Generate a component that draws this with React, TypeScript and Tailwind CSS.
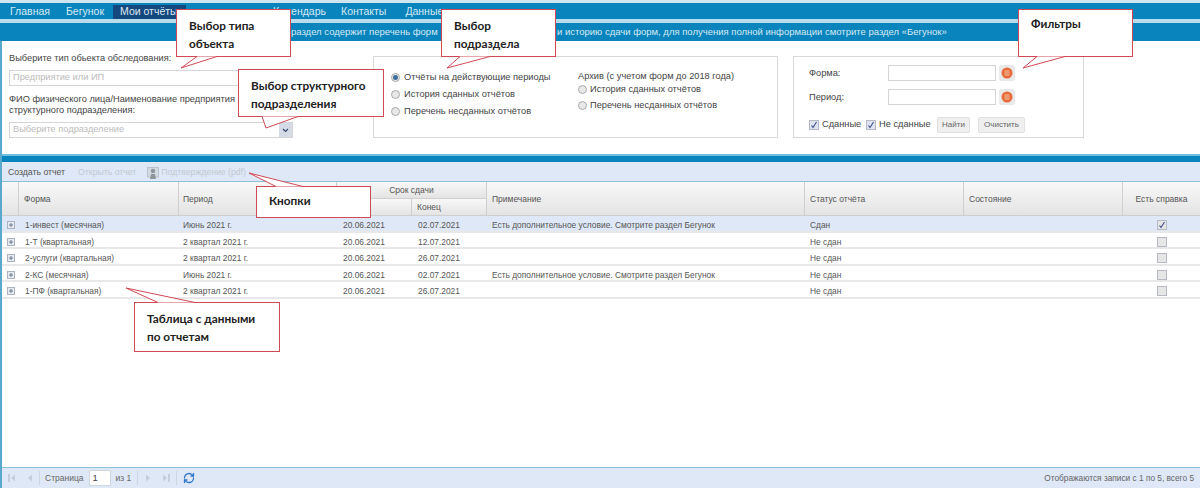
import { RefreshCw } from "lucide-react";
import type { ReactNode } from "react";

const rows = [
  { form: "1-инвест (месячная)", period: "Июнь 2021 г.", start: "20.06.2021", end: "02.07.2021", note: "Есть дополнительное условие. Смотрите раздел Бегунок", status: "Сдан", done: true },
  { form: "1-Т (квартальная)", period: "2 квартал 2021 г.", start: "20.06.2021", end: "12.07.2021", note: "", status: "Не сдан", done: false },
  { form: "2-услуги (квартальная)", period: "2 квартал 2021 г.", start: "20.06.2021", end: "26.07.2021", note: "", status: "Не сдан", done: false },
  { form: "2-КС (месячная)", period: "Июнь 2021 г.", start: "20.06.2021", end: "02.07.2021", note: "Есть дополнительное условие. Смотрите раздел Бегунок", status: "Не сдан", done: false },
  { form: "1-ПФ (квартальная)", period: "2 квартал 2021 г.", start: "20.06.2021", end: "26.07.2021", note: "", status: "Не сдан", done: false },
];

function Callout({ className, tail, children }: { className: string; tail: string; children: ReactNode }) {
  return (
    <div className={`absolute z-10 border border-[#cf4a55] bg-white pl-[12px] text-[11.8px] leading-[18px] font-bold text-[#222] font-['Lato',sans-serif] ${className}`}>
      <svg className="absolute left-0 top-0 h-full w-full overflow-visible">
        <polygon points={tail} fill="#fff" />
        <polyline points={tail} fill="none" stroke="#cf4a55" strokeWidth="1" />
      </svg>
      <div className="relative">{children}</div>
    </div>
  );
}

function Radio({ checked = false }: { checked?: boolean }) {
  return (
    <span className="flex h-[9px] w-[9px] shrink-0 items-center justify-center rounded-full border border-[#aaa] bg-[#e8e8e8]">
      {checked && <span className="h-[5px] w-[5px] rounded-full bg-[#3d6f9e]" />}
    </span>
  );
}

function Check({ checked, muted = false }: { checked: boolean; muted?: boolean }) {
  return (
    <span className={`flex h-[10px] w-[10px] shrink-0 items-center justify-center border border-[#b5b9c4] ${muted ? "bg-[#e6e6e6]" : "bg-[#dfe4f2]"}`}>
      {checked && (
        <svg width="8" height="8" viewBox="0 0 8 8">
          <path d="M1.5 4.5 L3 6.5 L6.5 1" fill="none" stroke="#3c4f8c" strokeWidth="1.1" />
        </svg>
      )}
    </span>
  );
}

function OrangeButton() {
  return (
    <span className="flex h-[16px] w-[16px] items-center justify-center rounded-[2px] bg-[#e9e9e9]">
      <svg width="12" height="12" viewBox="0 0 12 12">
        <circle cx="6" cy="6" r="5.5" fill="#e8693a" />
        <path d="M3.5 4h5M3.5 6h5M3.5 8h5" stroke="#f6c9a8" strokeWidth="1" />
      </svg>
    </span>
  );
}

function Expander() {
  return (
    <svg width="8" height="8" viewBox="0 0 8 8">
      <rect x="0.5" y="0.5" width="7" height="7" fill="#e6ebf0" stroke="#a9b4c0" />
      <path d="M2 4h4M4 2v4" stroke="#6a7a94" strokeWidth="1" />
    </svg>
  );
}

function Triangle({ dir, bar = false }: { dir: "left" | "right"; bar?: boolean }) {
  const path = dir === "left" ? "M7 1.5 L3 5 L7 8.5 Z" : "M2 1.5 L6 5 L2 8.5 Z";
  return (
    <svg width="9" height="10" viewBox="0 0 9 10">
      <path d={path} fill="#c5ced8" />
      {bar && <path d={dir === "left" ? "M1 1v8" : "M8 1v8"} stroke="#b3bdc9" strokeWidth="1.2" />}
    </svg>
  );
}

function HeaderCell({ className = "", children }: { className?: string; children?: ReactNode }) {
  return (
    <div className={`flex items-center border-r border-b border-[#cfcfcf] bg-linear-to-b from-[#f8f8f8] to-[#e4e4e4] pt-px ${className}`}>
      {children}
    </div>
  );
}

const gridCols = "grid-cols-[17px_160px_158px_75px_75px_318px_159px_159px_77px]";

export default function App() {
  return (
    <div className="relative flex h-[488px] w-[1200px] flex-col overflow-hidden bg-white text-[#555] font-['Liberation_Sans',sans-serif]">
      <div className="h-[3px] shrink-0 bg-[#cfe6f1]" />
      <nav className="flex h-[16px] shrink-0 items-end bg-[#0a84bd] pl-[5px] text-[10.5px] text-[#d6eaf4]">
        <span className="mr-[6px] flex h-[14px] items-center px-[5px]">Главная</span>
        <span className="flex h-[14px] items-center px-[5px]">Бегунок</span>
        <span className="ml-[4px] flex h-[14px] w-[73px] items-center bg-[#14497f] pl-[7px] text-[#dce8f2]">Мои отчёты</span>
        <span className="ml-[87px] mr-[15px] flex h-[14px] items-center">Календарь</span>
        <span className="mr-[19px] flex h-[14px] items-center">Контакты</span>
        <span className="flex h-[14px] items-center">Данные</span>
      </nav>
      <div className="h-[4px] shrink-0 bg-[#b9dcec]" />
      <div className="flex h-[18px] shrink-0 items-center bg-[#0a84bd] pl-[291px] text-[9.5px] text-[#d6eaf4]">
        <span className="w-[266px] shrink-0">раздел содержит перечень форм</span>
        <span>и историю сдачи форм, для получения полной информации смотрите раздел «Бегунок»</span>
      </div>

      <div className="flex min-h-0 flex-1 flex-col border-l-2 border-[#5aa9cc]">
        <section className="flex h-[113px] shrink-0 pt-[15px] pl-[7px] text-[9.25px] text-[#444]">
          <div className="flex w-[284px] shrink-0 flex-col">
            <div className="h-[14px] leading-[5px]">Выберите тип обьекта обследования:</div>
            <div className="flex h-[16px] items-center border border-[#d5d5d5] pl-[3px] text-[#bbb]">Предприятие или ИП</div>
            <div className="mt-[8px] h-[28px] leading-[11px]">
              ФИО физического лица/Наименование предприятия
              <br />
              структурного подразделения:
            </div>
            <div className="flex h-[16px] items-center justify-between border border-[#d5d5d5] pl-[3px] text-[#bbb]">
              Выберите подразделение
              <span className="flex h-full w-[13px] items-center justify-center bg-[#d5dbe6]">
                <svg width="7" height="5" viewBox="0 0 7 5">
                  <path d="M1 1 L3.5 3.5 L6 1" fill="none" stroke="#33496b" strokeWidth="1.2" />
                </svg>
              </span>
            </div>
          </div>

          <div className="ml-[80px] flex h-[82px] w-[405px] shrink-0 border border-[#d9d9d9] pl-[17px] pt-[15px]">
            <div className="flex w-[187px] flex-col gap-[6px]">
              <label className="flex h-[11px] items-center gap-[4px]"><Radio checked />Отчёты на действующие периоды</label>
              <label className="flex h-[11px] items-center gap-[4px]"><Radio />История сданных отчётов</label>
              <label className="flex h-[11px] items-center gap-[4px]"><Radio />Перечень несданных отчётов</label>
            </div>
            <div className="flex flex-col gap-[5px]">
              <div className="-mt-[1px] -mb-[3px] h-[11px] leading-[11px]">Архив (с учетом форм до 2018 года)</div>
              <label className="flex h-[11px] items-center gap-[3px]"><Radio />История сданных отчётов</label>
              <label className="flex h-[11px] items-center gap-[3px]"><Radio />Перечень несданных отчётов</label>
            </div>
          </div>

          <div className="ml-[15px] flex h-[82px] w-[291px] shrink-0 flex-col border border-[#d9d9d9] pl-[15px] pt-[8px]">
            <div className="flex items-center">
              <span className="w-[79px] pt-px">Форма:</span>
              <span className="mr-[3px] h-[16px] w-[108px] border border-[#d5d5d5]" />
              <OrangeButton />
            </div>
            <div className="mt-[8px] flex items-center">
              <span className="w-[79px] pt-px">Период:</span>
              <span className="mr-[3px] h-[16px] w-[108px] border border-[#d5d5d5]" />
              <OrangeButton />
            </div>
            <div className="mt-[12px] flex items-center">
              <Check checked />
              <span className="ml-[3px] w-[44px]">Сданные</span>
              <Check checked />
              <span className="ml-[3px] w-[58px]">Не сданные</span>
              <span className="flex h-[16px] w-[33px] items-center justify-center rounded-[2px] border border-[#e0e0e0] bg-[#efefef] text-[8px] text-[#666]">Найти</span>
              <span className="ml-[8px] flex h-[16px] w-[47px] items-center justify-center rounded-[2px] border border-[#e0e0e0] bg-[#efefef] text-[8px] text-[#666]">Очистить</span>
            </div>
          </div>
        </section>

        <div className="h-[8px] shrink-0 border-t-2 border-b border-t-[#6fc0dc] border-b-[#0a84bd] bg-[#0a84bd]" />

        <div className="flex h-[20px] shrink-0 items-center border-b border-[#8cc0d8] bg-[#dfe8f6] pl-[6px] pt-[2px] text-[8.7px]">
          <span className="text-[#555]">Создать отчет</span>
          <span className="ml-[13px] text-[#c0c8d2]">Открыть отчет</span>
          <svg className="ml-[11px] mr-[2px]" width="12" height="12" viewBox="0 0 12 12">
            <rect x="0.5" y="0.5" width="11" height="9.5" fill="#d4dae2" stroke="#b9c2cc" />
            <circle cx="6" cy="4" r="2.2" fill="#8f959c" />
            <path d="M3 12 L4 7 H8 L9 12 Z" fill="#8f959c" />
          </svg>
          <span className="text-[#c0c8d2]">Подтверждение (pdf)</span>
        </div>

        <div className={`grid h-[34px] shrink-0 grid-rows-2 text-[8.5px] text-[#555] ${gridCols}`}>
          <HeaderCell className="row-span-2" />
          <HeaderCell className="row-span-2 pl-[5px]">Форма</HeaderCell>
          <HeaderCell className="row-span-2 pl-[4px]">Период</HeaderCell>
          <HeaderCell className="col-span-2 justify-center">Срок сдачи</HeaderCell>
          <HeaderCell className="row-span-2 pl-[5px]">Примечание</HeaderCell>
          <HeaderCell className="row-span-2 pl-[5px]">Статус отчёта</HeaderCell>
          <HeaderCell className="row-span-2 pl-[5px]">Состояние</HeaderCell>
          <HeaderCell className="row-span-2 justify-center border-r-0">Есть справка</HeaderCell>
          <HeaderCell />
          <HeaderCell className="pl-[5px]">Конец</HeaderCell>
        </div>

        <div className="min-h-0 flex-1 text-[8.4px] text-[#555]">
          {rows.map((row, i) => (
            <div key={row.form} className={`grid h-[16.5px] items-center border-b-2 border-[#e8e8e8] pt-[3px] ${gridCols} ${i === 0 ? "bg-[#dfe8f6]" : "bg-white"}`}>
              <span className="flex justify-center"><Expander /></span>
              <span className="truncate pl-[6px]">{row.form}</span>
              <span className="truncate pl-[4px]">{row.period}</span>
              <span className="pl-[6px]">{row.start}</span>
              <span className="pl-[6px]">{row.end}</span>
              <span className="truncate pl-[5px]">{row.note}</span>
              <span className="pl-[5px]">{row.status}</span>
              <span />
              <span className="flex justify-center"><Check checked={row.done} muted /></span>
            </div>
          ))}
        </div>

        <footer className="flex h-[21px] shrink-0 items-center border-t border-[#8cc0d8] bg-[#dfe8f6] pl-[6px] pr-[6px] text-[8.5px] text-[#666]">
          <Triangle dir="left" bar />
          <span className="ml-[8px]"><Triangle dir="left" /></span>
          <span className="mx-[5px] h-[14px] w-px bg-[#cdd6e2]" />
          <span>Страница</span>
          <span className="mx-[5px] flex h-[16px] w-[22px] items-center border border-[#cfd6df] bg-white pl-[3px] text-[9.5px] text-[#444]">1</span>
          <span>из 1</span>
          <span className="mx-[6px] h-[14px] w-px bg-[#cdd6e2]" />
          <Triangle dir="right" />
          <span className="ml-[8px]"><Triangle dir="right" bar /></span>
          <span className="mx-[6px] h-[14px] w-px bg-[#cdd6e2]" />
          <RefreshCw size={12} strokeWidth={2.6} className="text-[#2f77c9]" />
          <span className="ml-auto text-[8.3px]">Отображаются записи с 1 по 5, всего 5</span>
        </footer>
      </div>

      <Callout className="left-[176px] top-[9px] h-[48px] w-[115px] pt-[7px]" tail="20,46.5 4,58 40,46.5">
        Выбор типа<br />объекта
      </Callout>
      <Callout className="left-[238px] top-[69px] h-[48px] w-[146px] pt-[7px]" tail="23,46.5 27,58 59,46.5">
        Выбор структурного<br />подразделения
      </Callout>
      <Callout className="left-[441px] top-[9px] h-[48px] w-[115px] pt-[7px]" tail="18,46.5 5,58 48,46.5">
        Выбор<br />подраздела
      </Callout>
      <Callout className="left-[1018px] top-[9px] h-[48px] w-[115px] pt-[5px]" tail="18,46.5 4,58 46,46.5">
        Фильтры
      </Callout>
      <Callout className="left-[256px] top-[186px] h-[32px] w-[115px] pt-[5px]" tail="19,-0.5 -8,-14 46,-0.5">
        Кнопки
      </Callout>
      <Callout className="left-[134px] top-[302px] h-[50px] w-[146px] pt-[7px]" tail="23,-0.5 -9,-15 60,-0.5">
        Таблица с данными<br />по отчетам
      </Callout>
    </div>
  );
}
